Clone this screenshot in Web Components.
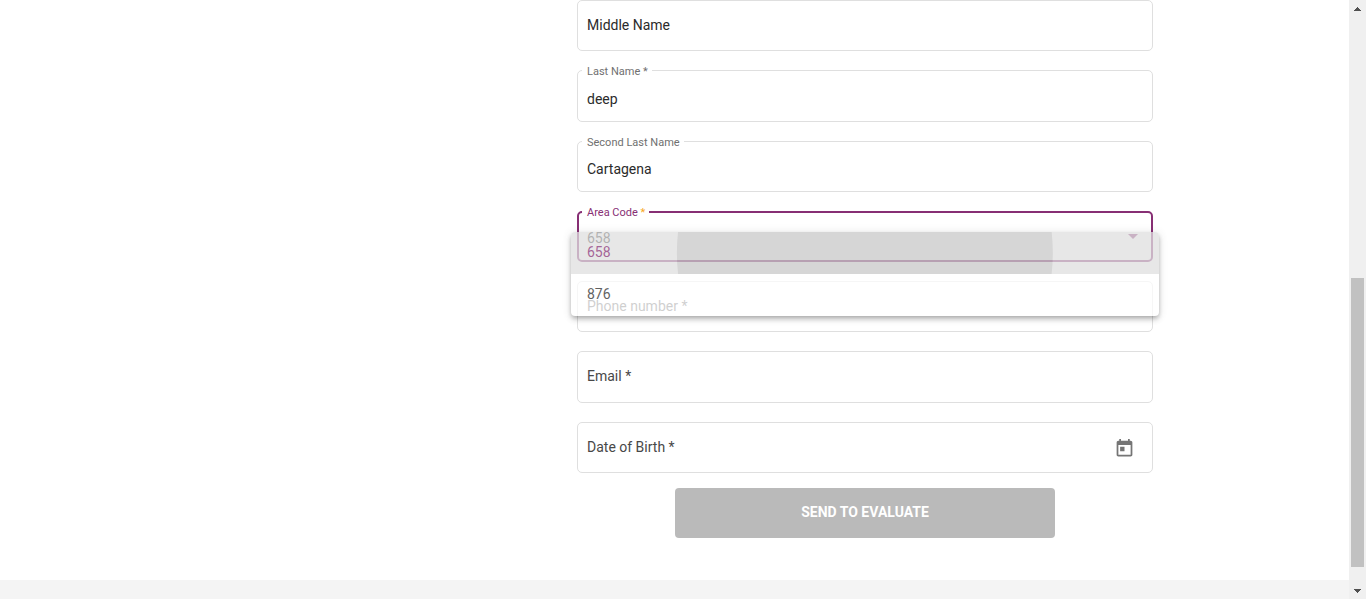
<!DOCTYPE html>
<html lang="en">
<head>
<meta charset="utf-8">
<meta name="viewport" content="width=device-width, initial-scale=1">
<title>Evaluation request</title>
<style>
  html, body { margin: 0; height: 100%; }
  body { font: 14px/20px Roboto, sans-serif; color: #2b2b2b; background: #fff; overflow: hidden; }
</style>
</head>
<body>
<app-page>
  <evaluation-form>
    <field-group>
      <text-field label="Middle Name" strong></text-field>
      <text-field label="Last Name" value="deep" required></text-field>
      <text-field label="Second Last Name" value="Cartagena"></text-field>
      <select-field label="Area Code" options="658,876"></select-field>
      <text-field label="Phone number" type="tel" required></text-field>
      <text-field label="Email" type="email" required></text-field>
      <text-field label="Date of Birth" required><calendar-button></calendar-button></text-field>
    </field-group>
    <submit-button slot="action">SEND TO EVALUATE</submit-button>
  </evaluation-form>
</app-page>

<script>
const define = (name, html, setup) => customElements.define(name, class extends HTMLElement {
  constructor() {
    super();
    this.attachShadow({ mode: 'open' });
  }
  connectedCallback() {
    if (this.shadowRoot.childNodes.length) return;
    this.shadowRoot.innerHTML = html;
    if (setup) setup(this, this.shadowRoot);
  }
});

const fieldStyles = `
  * { box-sizing: border-box; }
  :host { display: block; }
  .box {
    position: relative; display: flex; align-items: center; height: 100%;
    border: 1px solid #dfdfdf; border-radius: 5px; background: #fff;
  }
  input, select {
    flex: 1; min-width: 0; width: 100%; height: 100%; margin: 0; padding: 6px 9px 0;
    border: 0; outline: 0; background: none; appearance: none;
    font: inherit; color: #2b2b2b;
  }
  label { position: absolute; left: 9px; top: 14px; color: #484848; pointer-events: none; white-space: nowrap; }
  :host([strong]) label { color: #2b2b2b; }
  .floating label {
    left: 4px; top: -8px; padding: 0 4px 0 5px; background: #fff;
    font-size: 11px; line-height: 17px; color: #707070;
  }
`;

define('text-field', `
  <style>${fieldStyles}</style>
  <div class="box"><input id="control"><label for="control"></label><slot></slot></div>
`, (host, root) => {
  const input = root.querySelector('input');
  const required = host.hasAttribute('required');
  input.type = host.getAttribute('type') || 'text';
  input.value = host.getAttribute('value') || '';
  input.required = required;
  root.querySelector('label').textContent = host.getAttribute('label') + (required ? ' *' : '');
  const update = () => root.querySelector('.box').classList.toggle('floating', input.value !== '');
  input.addEventListener('input', update);
  update();
});

define('select-field', `
  <style>${fieldStyles}
    :host { position: relative; z-index: 1; }
    .box { border: 2px solid #872f74; }
    .floating label { left: 3px; top: -9px; color: #872f74; }
    .mark { color: #f7a823; }
    .arrow { flex: none; width: 10px; height: 5px; margin-right: 13px; background: #872f74; clip-path: polygon(0 0, 100% 0, 50% 100%); }
    select { padding: 4px 8px 0; }
    option-list { position: absolute; top: 21px; left: -6px; right: -6px; }
  </style>
  <div class="box floating">
    <select id="control"></select>
    <label for="control"><span class="name"></span> <span class="mark">*</span></label>
    <div class="arrow"></div>
  </div>
  <option-list></option-list>
`, (host, root) => {
  const values = host.getAttribute('options').split(',');
  root.querySelector('.name').textContent = host.getAttribute('label');
  for (const value of values) root.querySelector('select').add(new Option(value, value));
  const list = root.querySelector('option-list');
  values.forEach((value, i) => {
    const item = document.createElement('list-option');
    item.textContent = value;
    item.toggleAttribute('selected', i === 0);
    list.append(item);
  });
});

define('option-list', `
  <style>
    :host {
      display: block; overflow: hidden; opacity: .74; background: #fff; border-radius: 4px;
      box-shadow: 0 2px 4px -1px rgba(0,0,0,.3), 0 4px 5px rgba(0,0,0,.18), 0 1px 10px rgba(0,0,0,.14);
    }
  </style>
  <div role="listbox" aria-label="Area Code"><slot></slot></div>
`);

define('list-option', `
  <style>
    :host { display: block; color: #2b2b2b; }
    :host([selected]) { color: #872f74; background: #e0e0e0; }
    div { position: relative; overflow: hidden; height: 42px; padding: 10px 16px; box-sizing: border-box; }
    span { position: relative; }
    :host([selected]) div::before {
      content: ""; position: absolute; left: 50%; top: 50%; width: 64%; aspect-ratio: 1;
      border-radius: 50%; background: #c8c8c8; transform: translate(-50%, -50%);
    }
  </style>
  <div role="option"><span><slot></slot></span></div>
`, (host, root) => {
  root.querySelector('[role=option]').setAttribute('aria-selected', host.hasAttribute('selected'));
});

define('calendar-button', `
  <style>
    :host { display: flex; flex: none; margin-right: 17px; }
    button { display: flex; margin: 0; padding: 2px 0 0; border: 0; background: none; color: #757575; }
    svg { width: 21px; height: 21px; fill: currentColor; }
  </style>
  <button type="button" aria-label="Open calendar">
    <svg viewBox="0 0 24 24"><path d="M19 3h-1V1h-2v2H8V1H6v2H5c-1.11 0-1.99.9-1.99 2L3 19c0 1.1.89 2 2 2h14c1.1 0 2-.9 2-2V5c0-1.1-.9-2-2-2zm0 16H5V8h14v11zM7 10h5v5H7z"/></svg>
  </button>
`);

define('submit-button', `
  <style>
    :host { display: block; width: 66%; margin: 0 auto; }
    button {
      display: block; width: 100%; height: 50px; margin: 0; padding: 0 0 2px; border: 0; border-radius: 4px;
      background: #bababa; color: #fff; font: inherit; font-weight: 700;
    }
  </style>
  <button type="button"><slot></slot></button>
`);

define('field-group', `
  <style>:host { display: grid; grid-auto-rows: 1fr; gap: 19px; min-height: 473px; }</style>
  <slot></slot>
`);

define('evaluation-form', `
  <style>
    :host { display: block; }
    form { display: grid; gap: 15px; }
  </style>
  <form><slot></slot><slot name="action"></slot></form>
`);

define('page-scrollbar', `
  <style>
    :host { display: flex; flex-direction: column; width: 17px; background: #f0f0f0; }
    .end { display: flex; flex: none; justify-content: center; align-items: center; height: 17px; }
    svg { width: 7px; height: 4px; fill: #505050; }
    .before { flex: 261; }
    .thumb { flex: 289; margin: 0 2px; background: #c1c1c1; }
    .after { flex: 15; }
  </style>
  <div class="end"><svg viewBox="0 0 7 4"><path d="M3 0h1v1h1v1h1v1h1v1H0V3h1V2h1V1h1z"/></svg></div>
  <div class="before"></div><div class="thumb"></div><div class="after"></div>
  <div class="end"><svg viewBox="0 0 7 4"><path d="M0 0h7v1H6v1H5v1H4v1H3V3H2V2H1V1H0z"/></svg></div>
`);

define('app-page', `
  <style>
    :host { display: flex; height: 100vh; overflow: hidden; }
    .view { flex: 1; min-width: 0; display: flex; flex-direction: column; }
    main { display: grid; grid-template-columns: 577fr 576fr 196fr; padding-bottom: 42px; }
    main slot { display: block; grid-column: 2; }
    footer { flex: 1; background: #f4f4f4; }
  </style>
  <div class="view"><main><slot></slot></main><footer></footer></div>
  <page-scrollbar aria-hidden="true"></page-scrollbar>
`);
</script>
</body>
</html>
